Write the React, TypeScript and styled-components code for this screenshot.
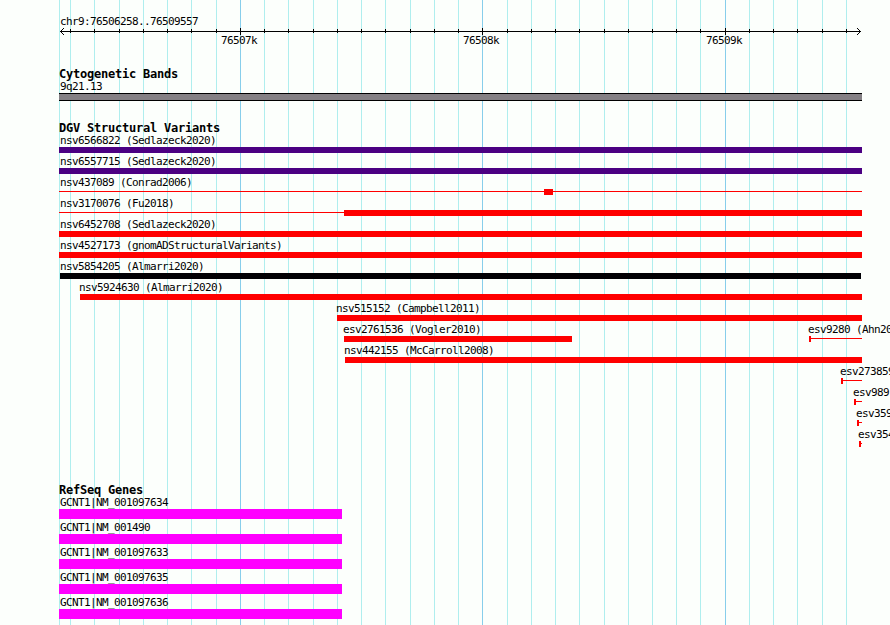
import React from "react";
import styled, { createGlobalStyle } from "styled-components";

type Glyph = {
  start: number;
  end: number;
  height?: number;
  offset?: number;
  color?: string;
};

type Feature = {
  label: string;
  start: number;
  glyphs: Glyph[];
};

const RED = "#ff0000";
const INDIGO = "#4b0082";
const BLACK = "#000004";
const MAGENTA = "#ff00ff";

const PANEL_START = 59;
const PANEL_END = 862;
const LABEL_START = 60;

const MAJOR_TICKS = [240, 482, 725];
const MINOR_TICKS = [
  70, 94, 119, 143, 167, 191, 216, 264, 288, 313, 337, 361, 385, 410, 434, 458,
  507, 531, 555, 579, 604, 628, 652, 676, 700, 749, 773, 797, 822, 846,
];
const GRID_LINES = [PANEL_START, ...MINOR_TICKS, ...MAJOR_TICKS];

const TICK_LABELS = [
  { start: 221, text: "76507k" },
  { start: 463, text: "76508k" },
  { start: 706, text: "76509k" },
];

const solid = (
  label: string,
  start: number,
  color = RED,
  end = PANEL_END,
): Feature => ({
  label,
  start: Math.max(start - 1, LABEL_START),
  glyphs: [{ start, end, color }],
});

// Features running off the right edge: a short cap followed by a thin line
const clipped = (label: string, start: number): Feature => ({
  label,
  start: start - 1,
  glyphs: [
    { start, end: start + 2 },
    { start, end: PANEL_END, height: 1, offset: 2 },
  ],
});

const VARIANT_ROWS: Feature[][] = [
  [solid("nsv6566822 (Sedlazeck2020)", PANEL_START, INDIGO)],
  [solid("nsv6557715 (Sedlazeck2020)", PANEL_START, INDIGO)],
  [
    {
      label: "nsv437089 (Conrad2006)",
      start: LABEL_START,
      glyphs: [
        { start: PANEL_START, end: PANEL_END, height: 1, offset: 2 },
        { start: 544, end: 553 },
      ],
    },
  ],
  [
    {
      label: "nsv3170076 (Fu2018)",
      start: LABEL_START,
      glyphs: [
        { start: PANEL_START, end: 344, height: 1, offset: 2 },
        { start: 344, end: PANEL_END },
      ],
    },
  ],
  [solid("nsv6452708 (Sedlazeck2020)", PANEL_START)],
  [solid("nsv4527173 (gnomADStructuralVariants)", PANEL_START)],
  [solid("nsv5854205 (Almarri2020)", 60, BLACK, 861)],
  [solid("nsv5924630 (Almarri2020)", 80)],
  [solid("nsv515152 (Campbell2011)", 337)],
  [
    solid("esv2761536 (Vogler2010)", 344, RED, 572),
    clipped("esv9280 (Ahn2009)", 809),
  ],
  [solid("nsv442155 (McCarroll2008)", 345)],
  [clipped("esv273859", 841)],
  [clipped("esv989", 854)],
  [clipped("esv359", 857)],
  [clipped("esv354", 859)],
];

const GENES = [
  "GCNT1|NM_001097634",
  "GCNT1|NM_001490",
  "GCNT1|NM_001097633",
  "GCNT1|NM_001097635",
  "GCNT1|NM_001097636",
];

const GlobalStyle = createGlobalStyle`
  body {
    margin: 0;
    background: #fcfffc;
    overflow: hidden;
  }
`;

const Browser = styled.main`
  position: relative;
  box-sizing: border-box;
  width: 890px;
  height: 625px;
  padding-top: 16px;
  overflow: hidden;
  color: #000;
  font-family: "DejaVu Sans Mono", "Liberation Mono", monospace;
  font-size: 11px;
  line-height: 12px;
  letter-spacing: -0.622px;
  white-space: pre;
`;

const GridLayer = styled.svg`
  position: absolute;
  inset: 0;
  pointer-events: none;
`;

const Tracks = styled.div`
  position: relative;
  display: flex;
  flex-direction: column;
`;

const Ruler = styled.header`
  display: flex;
  flex-direction: column;
`;

const Axis = styled.svg`
  display: block;
`;

const Overlay = styled.div`
  display: grid;
  justify-items: start;

  > * {
    grid-area: 1 / 1;
  }
`;

const Label = styled.span<{ $start: number }>`
  height: 12px;
  margin-left: ${({ $start }) => $start}px;
`;

const Track = styled.section<{ $gap: number }>`
  display: flex;
  flex-direction: column;
  margin-top: ${({ $gap }) => $gap}px;
`;

const TrackTitle = styled.h2`
  height: 12px;
  margin: 0 0 0 ${PANEL_START}px;
  font-size: 12px;
  font-weight: 700;
  line-height: 10px;
  letter-spacing: -0.224px;
`;

const Band = styled.div`
  box-sizing: border-box;
  width: ${PANEL_END - PANEL_START}px;
  height: 8px;
  margin-left: ${PANEL_START}px;
  background: #848084;
  border: solid #000;
  border-width: 1px 0;
`;

const FeatureRow = styled(Overlay)<{ $height: number }>`
  height: ${({ $height }) => $height}px;
`;

const FeatureBox = styled.div`
  display: flex;
  flex-direction: column;
`;

const Bar = styled.div<{ $glyph: Glyph }>`
  width: ${({ $glyph }) => $glyph.end - $glyph.start}px;
  height: ${({ $glyph }) => $glyph.height ?? 6}px;
  margin: ${({ $glyph }) => $glyph.offset ?? 0}px 0 0
    ${({ $glyph }) => $glyph.start}px;
  background: ${({ $glyph }) => $glyph.color ?? RED};
`;

function FeatureItem({ feature }: { feature: Feature }) {
  return (
    <FeatureBox>
      <Label $start={feature.start}>{feature.label}</Label>
      <Overlay>
        {feature.glyphs.map((glyph, index) => (
          <Bar $glyph={glyph} key={index} />
        ))}
      </Overlay>
    </FeatureBox>
  );
}

function Grid() {
  return (
    <GridLayer height="625" shapeRendering="crispEdges" width="890">
      {GRID_LINES.map((x) => (
        <rect
          fill={MAJOR_TICKS.includes(x) ? "#87ceeb" : "#afeeee"}
          height="625"
          key={x}
          width="1"
          x={x}
          y="0"
        />
      ))}
    </GridLayer>
  );
}

function ScaleAxis() {
  return (
    <Axis height="7" shapeRendering="crispEdges" width="890">
      <rect height="1" width="801" x="60" y="3" />
      {MINOR_TICKS.map((x) => (
        <rect height="4" key={x} width="1" x={x} y="1" />
      ))}
      {MAJOR_TICKS.map((x) => (
        <rect height="7" key={x} width="1" x={x} y="0" />
      ))}
      {[0, 1, 2, 3].map((step) => (
        <React.Fragment key={step}>
          <rect height="1" width="1" x={60 + step} y={3 - step} />
          <rect height="1" width="1" x={60 + step} y={3 + step} />
          <rect height="1" width="1" x={860 - step} y={3 - step} />
          <rect height="1" width="1" x={860 - step} y={3 + step} />
        </React.Fragment>
      ))}
    </Axis>
  );
}

function App() {
  return (
    <Browser>
      <GlobalStyle />
      <Grid />
      <Tracks>
        <Ruler>
          <Label $start={LABEL_START}>chr9:76506258..76509557</Label>
          <ScaleAxis />
          <Overlay>
            {TICK_LABELS.map(({ start, text }) => (
              <Label $start={start} key={text}>
                {text}
              </Label>
            ))}
          </Overlay>
        </Ruler>

        <Track $gap={22}>
          <TrackTitle>Cytogenetic Bands</TrackTitle>
          <Label $start={LABEL_START}>9q21.13</Label>
          <Band />
        </Track>

        <Track $gap={22}>
          <TrackTitle>DGV Structural Variants</TrackTitle>
          {VARIANT_ROWS.map((features) => (
            <FeatureRow $height={21} key={features[0].label}>
              {features.map((feature) => (
                <FeatureItem feature={feature} key={feature.label} />
              ))}
            </FeatureRow>
          ))}
        </Track>

        <Track $gap={35}>
          <TrackTitle>RefSeq Genes</TrackTitle>
          {GENES.map((gene) => (
            <FeatureRow $height={25} key={gene}>
              <FeatureItem
                feature={{
                  label: gene,
                  start: LABEL_START,
                  glyphs: [
                    { start: PANEL_START, end: 342, height: 10, color: MAGENTA },
                  ],
                }}
              />
            </FeatureRow>
          ))}
        </Track>
      </Tracks>
    </Browser>
  );
}

export default App;
